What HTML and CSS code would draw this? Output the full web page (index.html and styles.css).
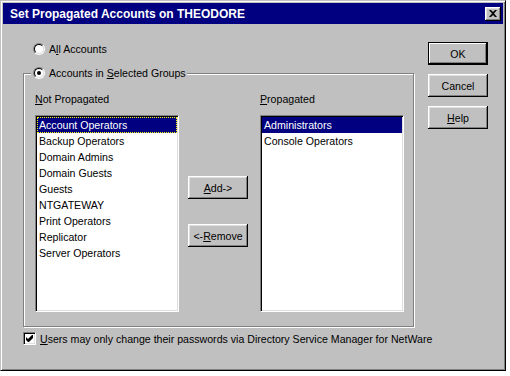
FILE: index.html
```html
<!DOCTYPE html>
<html lang="en">
<head>
  <meta charset="UTF-8">
  <title>Set Propagated Accounts</title>
  <link rel="stylesheet" href="styles.css">
</head>
<body>
  <div class="dialog">
    <div class="titlebar">
      <span class="title">Set Propagated Accounts on THEODORE</span>
      <span class="close">
        <svg width="8" height="7" viewBox="0 0 8 7"><path d="M0 0h2l2 2 2-2h2L5 3.5 8 7H6L4 5 2 7H0l3-3.5z" fill="#000"/></svg>
      </span>
    </div>

    <div class="content">
      <div class="main">
        <div class="options">
          <label class="radio-row first"><span class="radio"></span><span>A<u>l</u>l Accounts</span></label>

          <fieldset class="group">
            <legend>
              <label class="radio-row"><span class="radio on"></span><span>Accounts in <u>S</u>elected Groups</span></label>
            </legend>
            <div class="lists">
              <div class="col">
                <div class="caption"><u>N</u>ot Propagated</div>
                <ul class="listbox">
                  <li class="item sel focus">Account Operators</li>
                  <li class="item">Backup Operators</li>
                  <li class="item">Domain Admins</li>
                  <li class="item">Domain Guests</li>
                  <li class="item">Guests</li>
                  <li class="item">NTGATEWAY</li>
                  <li class="item">Print Operators</li>
                  <li class="item">Replicator</li>
                  <li class="item">Server Operators</li>
                </ul>
              </div>
              <div class="moves">
                <button class="btn"><u>A</u>dd-&gt;</button>
                <button class="btn">&lt;-<u>R</u>emove</button>
              </div>
              <div class="col">
                <div class="caption"><u>P</u>ropagated</div>
                <ul class="listbox">
                  <li class="item sel">Administrators</li>
                  <li class="item">Console Operators</li>
                </ul>
              </div>
            </div>
          </fieldset>
        </div>

        <div class="actions">
          <button class="btn default">OK</button>
          <button class="btn">Cancel</button>
          <button class="btn"><u>H</u>elp</button>
        </div>
      </div>

      <label class="check-row">
        <span class="checkbox">
          <svg width="13" height="13" viewBox="0 0 13 13"><polygon points="3,5 5,7 9,3 10,3 10,6 6,10 5,10 3,8" fill="#000"/></svg>
        </span>
        <span><u>U</u>sers may only change their passwords via Directory Service Manager for NetWare</span>
      </label>
    </div>
  </div>
</body>
</html>
```

FILE: styles.css
```css
body { margin: 0; background: #fff; font-family: "Liberation Sans", Arial, sans-serif; font-size: 10.6px; color: #000; }

.dialog { width: 506px; height: 371px; box-sizing: border-box; padding: 2px; display: flex; flex-direction: column; background: #c0c0c0; border: 1px solid; border-color: #c0c0c0 #000 #000 #c0c0c0; box-shadow: inset 1px 1px #fff, inset -1px -1px #808080; }

.titlebar { height: 21px; flex: none; display: flex; align-items: center; justify-content: space-between; padding: 0 2px 0 7px; background: #000080; color: #fff; }
.title { font-weight: bold; font-size: 12px; }
.close { width: 16px; height: 14px; box-sizing: border-box; display: flex; align-items: center; justify-content: center; background: #c0c0c0; box-shadow: inset -1px -1px #000, inset 1px 1px #fff, inset -2px -2px #808080, inset 2px 2px #dfdfdf; }
.close svg { display: block; margin: -1px 0 0 -1px; }

.content { padding: 18px 0 0 20px; }
.main { display: flex; align-items: flex-start; }
.options { width: 391px; }
.actions { margin-left: 14px; display: flex; flex-direction: column; gap: 9px; }

.radio-row { display: flex; align-items: center; gap: 4px; height: 14px; }
.radio-row.first { margin-left: 10px; }
.radio { width: 12px; height: 12px; box-sizing: border-box; position: relative; border-radius: 50%; border: 1px solid; border-color: #808080 #fff #fff #808080; }
.radio::before { content: ""; position: absolute; inset: 0; border-radius: 50%; border: 1px solid; border-color: #000 #dfdfdf #dfdfdf #000; background: #fff; }
.radio.on::after { content: ""; position: absolute; left: 3px; top: 3px; width: 4px; height: 4px; border-radius: 50%; background: #000; }

.group { margin: 10px 0 0; padding: 13px 9px 14px 11px; min-inline-size: 0; box-sizing: border-box; width: 391px; border: 1px solid #808080; box-shadow: inset 1px 1px #fff, 1px 1px #fff; }
.group legend { padding: 0 1px 0 2px; margin-left: -4px; background: #c0c0c0; }

.lists { display: flex; }
.col { width: 144px; }
.caption { line-height: 13px; margin-bottom: 9px; }
.moves { width: 60px; margin: 0 12px 0 9px; padding-top: 83px; display: flex; flex-direction: column; gap: 25px; }

.listbox { list-style: none; margin: 0; padding: 1px; height: 197px; box-sizing: border-box; background: #fff; border: 1px solid; border-color: #808080 #fff #fff #808080; box-shadow: inset 1px 1px #000, inset -1px -1px #dfdfdf; }
.item { line-height: 16px; padding-left: 2px; white-space: nowrap; }
.item.sel { background: #000080; color: #fff; }
.item.focus { outline: 1px dotted #ffff00; outline-offset: -1px; }

.btn { width: 60px; height: 23px; box-sizing: border-box; padding: 0; border: 0; font: inherit; color: #000; background: #c0c0c0; box-shadow: inset -1px -1px #000, inset 1px 1px #fff, inset -2px -2px #808080, inset 2px 2px #dfdfdf; }
.btn.default { border: 1px solid #000; box-shadow: inset -1px -1px #000, inset 1px 1px #fff, inset -2px -2px #808080; }

.check-row { display: flex; align-items: center; gap: 4px; height: 15px; margin-top: 4px; }
.checkbox { width: 13px; height: 13px; box-sizing: border-box; position: relative; background: #fff; border: 1px solid; border-color: #808080 #fff #fff #808080; box-shadow: inset 1px 1px #000, inset -1px -1px #dfdfdf; }
.checkbox svg { position: absolute; left: -1px; top: -1px; }
```
